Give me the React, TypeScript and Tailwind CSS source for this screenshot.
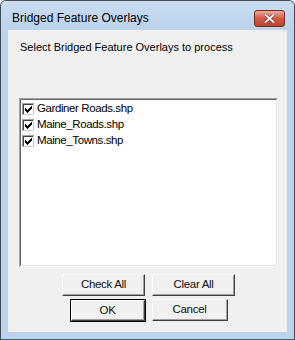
import React from "react";

const items = ["Gardiner Roads.shp", "Maine_Roads.shp", "Maine_Towns.shp"];

function CheckBox() {
    // classic 13x13 sunken checkbox with pixel check mark
    const check: [number, number][] = [
        [3, 5], [4, 6], [5, 7], [6, 6], [7, 5], [8, 4], [9, 3],
    ];
    return (
        <svg width="13" height="13" viewBox="0 0 13 13" shapeRendering="crispEdges" className="shrink-0">
            <rect x="0" y="0" width="13" height="13" fill="#ffffff" />
            <rect x="0" y="0" width="12" height="1" fill="#a0a0a0" />
            <rect x="0" y="0" width="1" height="12" fill="#a0a0a0" />
            <rect x="1" y="1" width="10" height="1" fill="#404040" />
            <rect x="1" y="1" width="1" height="10" fill="#404040" />
            <rect x="12" y="0" width="1" height="13" fill="#ffffff" />
            <rect x="0" y="12" width="13" height="1" fill="#ffffff" />
            <rect x="11" y="1" width="1" height="11" fill="#d4d0c8" />
            <rect x="1" y="11" width="11" height="1" fill="#d4d0c8" />
            {check.map(([x, y]) => (
                <rect key={x} x={x} y={y} width="1" height="3" fill="#000000" />
            ))}
        </svg>
    );
}

function WinButton({ label, width, isDefault }: { label: string; width: string; isDefault?: boolean }) {
    return (
        <div className={`${width} ${isDefault ? "h-[23px] border border-black" : "h-[22px]"} flex`}>
            <button className="flex-1 flex items-center justify-center bg-[#f0f0f0] border-t border-l border-t-white border-l-white border-b border-r border-b-[#404040] border-r-[#404040] shadow-[inset_-1px_-1px_0_#a0a0a0] text-[11.5px] font-normal tracking-[-0.3px] text-[#111] leading-none">
                {label}
            </button>
        </div>
    );
}

export default function App() {
    return (
        <div
            className="w-[295px] h-[340px] flex flex-col border border-[#3f4c5a] border-b-[#2a6b78] rounded-t-[6px] bg-[#bcd3ec] overflow-hidden"
            style={{ fontFamily: "'Liberation Sans', Arial, sans-serif" }}
        >
            <div className="h-[29px] flex items-start bg-gradient-to-b from-[#c9dcf1] to-[#bcd3ec] pl-[11px] pr-[9px]">
                <span className="mt-[8px] text-[12px] text-black flex-1">Bridged Feature Overlays</span>
                <div className="mt-[9px] w-[31px] h-[17px] rounded-[3px] border border-[#7a2a22] bg-gradient-to-b from-[#e9a99c] via-[#d35a45] to-[#c0402c] flex items-center justify-center">
                    <svg width="11" height="9" viewBox="0 0 11 9">
                        <path d="M1.5 1 L9.5 8 M9.5 1 L1.5 8" stroke="#5a1a12" strokeWidth="3" strokeLinecap="square" />
                        <path d="M1.5 1 L9.5 8 M9.5 1 L1.5 8" stroke="#ffffff" strokeWidth="2" strokeLinecap="square" />
                    </svg>
                </div>
            </div>

            <div className="mx-[7px] mb-[7px] flex-1 flex flex-col bg-[#f0f0f0]">
                <p className="pl-[12px] pt-[11px] text-[11px] text-black leading-[13px]">
                    Select Bridged Feature Overlays to process
                </p>

                <div className="ml-[11px] mt-[44px] w-[259px] h-[169px] border border-t-[#a0a0a0] border-l-[#a0a0a0] border-b-white border-r-white">
                    <div className="w-full h-full bg-white border border-t-[#696969] border-l-[#696969] border-b-[#e3e3e3] border-r-[#e3e3e3] flex flex-col pt-[1px] pl-[1px]">
                        {items.map((name) => (
                            <div key={name} className="h-[16px] flex items-center gap-[2px]">
                                <CheckBox />
                                <span className="text-[11.5px] tracking-[-0.4px] text-black leading-none">{name}</span>
                            </div>
                        ))}
                    </div>
                </div>

                <div className="mt-[7px] flex justify-center gap-[7px] pl-[2px]">
                    <WinButton label="Check All" width="w-[83px]" />
                    <WinButton label="Clear All" width="w-[83px]" />
                </div>
                <div className="mt-[3px] flex justify-center gap-[6px] pl-[2px]">
                    <WinButton label="OK" width="w-[76px]" isDefault />
                    <WinButton label="Cancel" width="w-[76px]" />
                </div>
            </div>
        </div>
    );
}
